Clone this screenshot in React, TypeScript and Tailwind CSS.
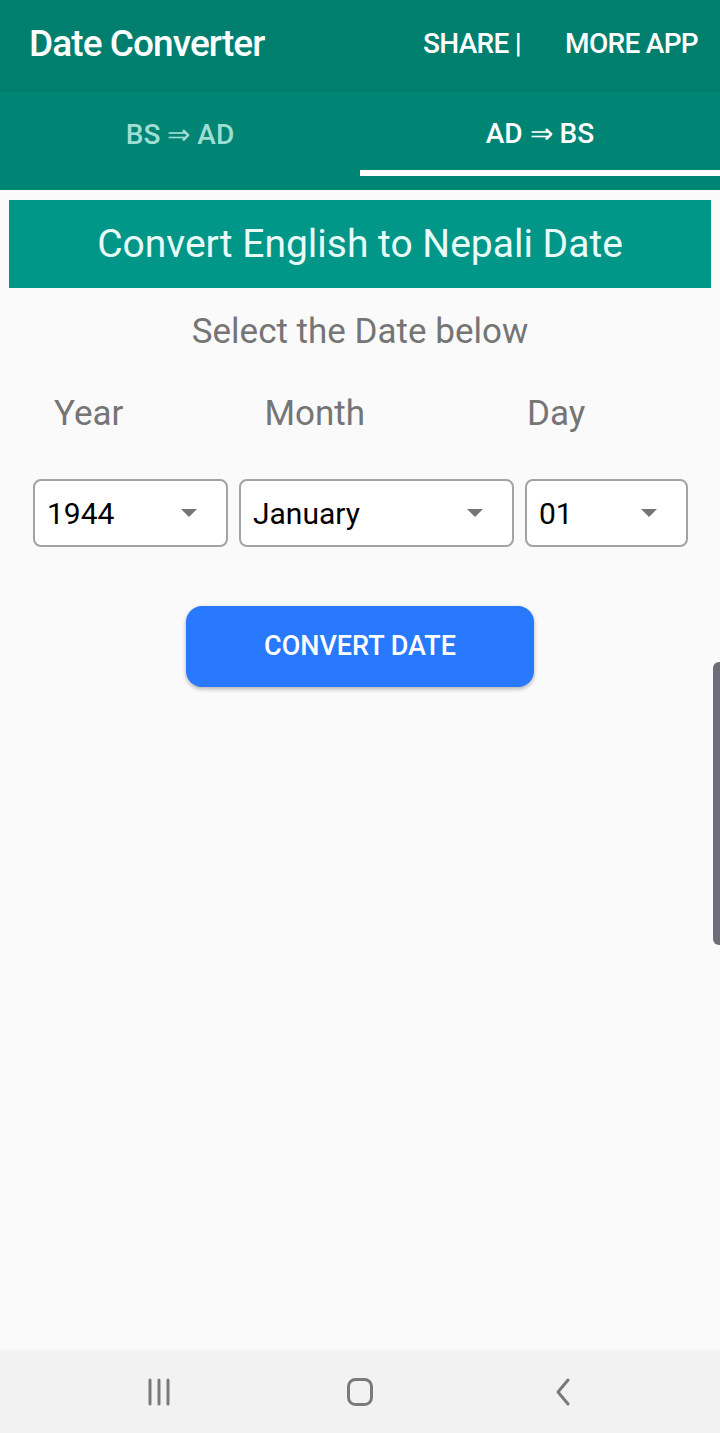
const selects = [
  { value: "1944", width: "w-[195px]" },
  { value: "January", width: "w-[275px]" },
  { value: "01", width: "w-[163px]" },
];

function Caret() {
  return (
    <svg width="18" height="10" viewBox="0 0 18 10" className="shrink-0">
      <path d="M1 1h16L9 9z" fill="#757575" />
    </svg>
  );
}

export default function App() {
  return (
    <div className="flex h-[1433px] w-[720px] flex-col bg-[#fafafa] font-['Roboto',sans-serif]">
      <header className="flex h-[92px] items-center bg-[#007f6e] pb-[4px] pl-[29px] pr-[22px] text-white shadow-[0_1px_2px_rgba(0,0,0,0.15)]">
        <h1 className="text-[37px] font-medium leading-[44px] tracking-tight">Date Converter</h1>
        <div className="ml-auto flex items-center gap-[44px] text-[28px] font-medium leading-[34px] tracking-tight">
          <span>SHARE |</span>
          <span>MORE APP</span>
        </div>
      </header>

      <nav className="flex h-[98px] bg-[#008474]">
        <div className="flex flex-1 items-center justify-center pb-[12px] text-[28px] font-medium leading-[34px] text-[#9fdfd3]">
          BS ⇒ AD
        </div>
        <div className="flex flex-1 flex-col">
          <div className="flex flex-1 items-center justify-center pt-[6px] text-[28px] font-medium leading-[34px] text-white">
            AD ⇒ BS
          </div>
          <div className="mb-[14px] h-[6px] bg-white" />
        </div>
      </nav>

      <main className="relative flex flex-1 flex-col items-center pt-[10px]">
        <div className="flex h-[88px] w-[702px] items-center justify-center bg-[#009688] text-[39px] text-[#e8fbf8]">
          Convert English to Nepali Date
        </div>
        <p className="mt-[24px] text-[35px] leading-[40px] text-[#757575]">Select the Date below</p>

        <div className="mt-[42px] flex w-full text-[35px] leading-[40px] text-[#757575]">
          <span className="ml-[54px]">Year</span>
          <span className="ml-[141px]">Month</span>
          <span className="ml-[162px]">Day</span>
        </div>

        <div className="mt-[45px] flex w-full gap-[11px] pl-[33px]">
          {selects.map((s) => (
            <div
              key={s.value}
              className={`flex h-[68px] ${s.width} items-center justify-between rounded-[8px] border-2 border-[#a3a3a3] bg-white pl-[12px] pr-[28px] text-[30px] text-black`}
            >
              <span>{s.value}</span>
              <Caret />
            </div>
          ))}
        </div>

        <button className="mt-[59px] h-[81px] w-[348px] rounded-[16px] bg-[#2979ff] text-[27px] font-medium text-white shadow-[0_2px_4px_rgba(0,0,0,0.3)]">
          CONVERT DATE
        </button>

        <div className="absolute right-0 top-[472px] h-[283px] w-[7px] rounded-l-[6px] bg-[#6e6d7a]" />
      </main>

      <footer className="flex h-[83px] items-center bg-[#f2f2f2] pl-[147px]">
        <svg width="28" height="28" viewBox="0 0 28 28">
          <path d="M3 2v24M12 2v24M21 2v24" stroke="#7a7a7a" strokeWidth="3" strokeLinecap="round" />
        </svg>
        <svg width="28" height="30" viewBox="0 0 28 30" className="ml-[171px]">
          <rect x="2.5" y="2.5" width="23" height="25" rx="7" fill="none" stroke="#7a7a7a" strokeWidth="3" />
        </svg>
        <svg width="18" height="30" viewBox="0 0 18 30" className="ml-[180px]">
          <path d="M14 3L4 15l10 12" fill="none" stroke="#7a7a7a" strokeWidth="3" strokeLinecap="round" strokeLinejoin="round" />
        </svg>
      </footer>
    </div>
  );
}
